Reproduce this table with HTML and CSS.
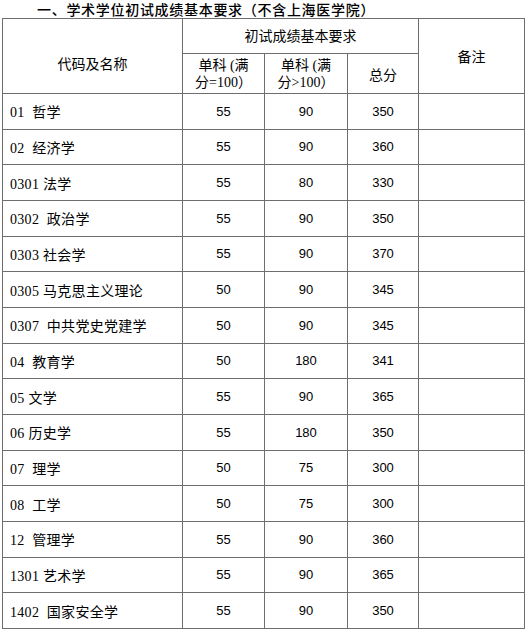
FILE: index.html
```html
<!DOCTYPE html>
<html lang="zh">
<head>
<meta charset="utf-8">
<title>学术学位初试成绩基本要求</title>
<link rel="stylesheet" href="styles.css">
</head>
<body>
<h1 class="title">一、学术学位初试成绩基本要求（不含上海医学院）</h1>
<table class="grid">
  <colgroup>
    <col class="c1"><col class="c2"><col class="c3"><col class="c4"><col class="c5">
  </colgroup>
  <thead>
    <tr class="h1">
      <th rowspan="2" class="hname">代码及名称</th>
      <th colspan="3" class="hgroup">初试成绩基本要求</th>
      <th rowspan="2" class="hnote">备注</th>
    </tr>
    <tr class="h2">
      <th class="hsub">单科 (满<br>分=100）</th>
      <th class="hsub">单科 (满<br>分&gt;100）</th>
      <th class="htotal">总分</th>
    </tr>
  </thead>
  <tbody>
    <tr><td class="name">01&nbsp;&nbsp;哲学</td><td class="num">55</td><td class="num">90</td><td class="num">350</td><td></td></tr>
    <tr><td class="name">02&nbsp;&nbsp;经济学</td><td class="num">55</td><td class="num">90</td><td class="num">360</td><td></td></tr>
    <tr><td class="name">0301 法学</td><td class="num">55</td><td class="num">80</td><td class="num">330</td><td></td></tr>
    <tr><td class="name">0302&nbsp;&nbsp;政治学</td><td class="num">55</td><td class="num">90</td><td class="num">350</td><td></td></tr>
    <tr><td class="name">0303 社会学</td><td class="num">55</td><td class="num">90</td><td class="num">370</td><td></td></tr>
    <tr><td class="name">0305 马克思主义理论</td><td class="num">50</td><td class="num">90</td><td class="num">345</td><td></td></tr>
    <tr><td class="name">0307&nbsp;&nbsp;中共党史党建学</td><td class="num">50</td><td class="num">90</td><td class="num">345</td><td></td></tr>
    <tr><td class="name">04&nbsp;&nbsp;教育学</td><td class="num">50</td><td class="num">180</td><td class="num">341</td><td></td></tr>
    <tr><td class="name">05 文学</td><td class="num">55</td><td class="num">90</td><td class="num">365</td><td></td></tr>
    <tr><td class="name">06 历史学</td><td class="num">55</td><td class="num">180</td><td class="num">350</td><td></td></tr>
    <tr><td class="name">07&nbsp;&nbsp;理学</td><td class="num">50</td><td class="num">75</td><td class="num">300</td><td></td></tr>
    <tr><td class="name">08&nbsp;&nbsp;工学</td><td class="num">50</td><td class="num">75</td><td class="num">300</td><td></td></tr>
    <tr><td class="name">12&nbsp;&nbsp;管理学</td><td class="num">55</td><td class="num">90</td><td class="num">360</td><td></td></tr>
    <tr><td class="name">1301 艺术学</td><td class="num">55</td><td class="num">90</td><td class="num">365</td><td></td></tr>
    <tr><td class="name">1402&nbsp;&nbsp;国家安全学</td><td class="num">55</td><td class="num">90</td><td class="num">350</td><td></td></tr>
  </tbody>
</table>
</body>
</html>
```

FILE: styles.css
```css
html, body {
  margin: 0;
  padding: 0;
  background: #ffffff;
}

body {
  color: #000000;
  font-family: "Liberation Serif", "Noto Sans CJK SC", serif;
}

.title {
  margin: 0;
  padding-left: 37px;
  height: 18px;
  font-size: 14px;
  line-height: 18px;
  font-weight: 500;
  letter-spacing: 0.7px;
  font-family: "Noto Sans CJK SC", sans-serif;
  white-space: nowrap;
}

.grid {
  margin-left: 2px;
  border-collapse: collapse;
  table-layout: fixed;
  width: 522px;
}

.c1 { width: 180px; }
.c2 { width: 82px; }
.c3 { width: 83px; }
.c4 { width: 71px; }
.c5 { width: 106px; }

.grid th,
.grid td {
  border: 1px solid #6e6e6e;
  padding: 0;
  vertical-align: middle;
}

.grid th {
  font-weight: 400;
  font-size: 14px;
  line-height: 20px;
  font-family: "Liberation Serif", "Noto Sans CJK SC", serif;
  text-align: center;
  vertical-align: top;
}

.h1 { height: 35px; }
.h2 { height: 40px; }

.grid .hname { padding-top: 36px; }
.grid .hgroup { padding-top: 8px; }
.grid .hnote { padding-top: 29px; }
.grid .htotal { padding-top: 12px; }

.grid .hsub {
  line-height: 16.5px;
  padding-top: 4px;
}

.grid tbody tr {
  height: 35.67px;
}

.grid .name {
  padding-left: 7px;
  font-size: 14px;
  letter-spacing: 0.3px;
  font-family: "Liberation Serif", "Noto Sans CJK SC", serif;
  white-space: nowrap;
}

.grid .num {
  text-align: center;
  font-size: 13px;
  font-family: "Liberation Sans", sans-serif;
}
```
